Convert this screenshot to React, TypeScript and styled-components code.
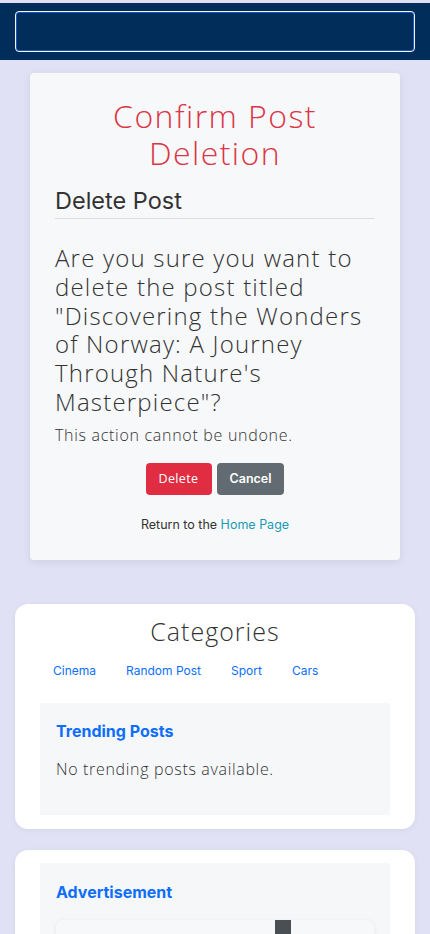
import React from "react";
import styled, { createGlobalStyle } from "styled-components";

const Global = createGlobalStyle`
  html, body { margin: 0; padding: 0; }
  body {
    background: #e1e1f6;
    font-family: Inter, "Liberation Sans", sans-serif;
    color: #333;
  }
  * { box-sizing: border-box; }
`;

const light = `"Open Sans", "Noto Sans", sans-serif`;

const Header = styled.header`
  margin-top: 3px;
  height: 57px;
  background: #012d5b;
  padding: 8px 15px 0;
`;

const SearchBox = styled.div`
  height: 41px;
  border: 1px solid #f2f6ff;
  border-radius: 4px;
  box-shadow: inset 0 0 0 1px #1556b8;
  background: #012d5b;
`;

const Main = styled.main`
  display: flex;
  flex-direction: column;
  padding: 13px 15px 0;
`;

const ConfirmCard = styled.section`
  margin: 0 15px;
  background: #f7f8fa;
  border-radius: 4px;
  box-shadow: 0 2px 8px rgba(0, 0, 0, 0.08);
  padding: 24px 25px 28px;
`;

const Title = styled.h1`
  margin: 0;
  text-align: center;
  color: #dc3545;
  font-family: ${light};
  font-weight: 300;
  font-size: 32px;
  letter-spacing: 0.045em;
  line-height: 37px;
`;

const SubTitle = styled.h2`
  margin: 15px 0 0;
  font-size: 23.5px;
  font-weight: 400;
  color: #333;
  line-height: 30px;
  padding-bottom: 2px;
  border-bottom: 1px solid #dadde2;
`;

const Question = styled.p`
  margin: 25px 0 0;
  font-family: ${light};
  font-weight: 300;
  font-size: 24px;
  letter-spacing: 0.05em;
  line-height: 28.8px;
  color: #333;
`;

const Note = styled.p`
  margin: 6px 0 0;
  font-family: ${light};
  font-weight: 300;
  font-size: 16px;
  letter-spacing: 0.044em;
  line-height: 24px;
  color: #333;
`;

const Buttons = styled.div`
  display: flex;
  justify-content: center;
  gap: 5px;
  margin-top: 16px;
`;

const Btn = styled.button<{ $variant: "danger" | "secondary" }>`
  height: 32px;
  border: none;
  border-radius: 4px;
  padding: 0 13px;
  color: #fff;
  font-size: 12.5px;
  font-family: ${(p) => (p.$variant === "danger" ? light : `Inter, sans-serif`)};
  font-weight: ${(p) => (p.$variant === "danger" ? 400 : 600)};
  letter-spacing: ${(p) => (p.$variant === "danger" ? "0.03em" : "0")};
  background: ${(p) => (p.$variant === "danger" ? "#e02d42" : "#616b71")};
`;

const ReturnLine = styled.p`
  margin: 22px 0 0;
  text-align: center;
  font-size: 12.5px;
  color: #333;
`;

const TealLink = styled.a`
  color: #1a9bb2;
  text-decoration: none;
`;

const WhiteCard = styled.section<{ $mt: number }>`
  margin-top: ${(p) => p.$mt}px;
  background: #fff;
  border-radius: 13px;
  box-shadow: 0 1px 6px rgba(0, 0, 0, 0.05);
  padding: 13px 25px 14px;
`;

const CatTitle = styled.h3`
  margin: 0;
  text-align: center;
  font-family: ${light};
  font-weight: 300;
  font-size: 25px;
  letter-spacing: 0.04em;
  line-height: 28px;
  color: #333;
`;

const CatNav = styled.nav`
  display: flex;
  margin: 17px 0 0 -2px;
`;

const CatLink = styled.a`
  color: #0d6efd;
  text-decoration: none;
  font-size: 12px;
  line-height: 18px;
  padding: 0 15px;
`;

const InnerBox = styled.div<{ $h?: number }>`
  margin-top: ${(p) => (p.$h ? 23 : 0)}px;
  background: #f6f7f9;
  padding: ${(p) => (p.$h ? "17px" : "18px")} 16px 20px;
  min-height: ${(p) => p.$h ?? 0}px;
`;

const BoxTitle = styled.h4`
  margin: 0;
  color: #0d6efd;
  font-size: 16px;
  font-weight: 700;
  line-height: 22px;
`;

const BoxText = styled.p`
  margin: 15px 0 0;
  font-family: ${light};
  font-weight: 300;
  font-size: 16px;
  letter-spacing: 0.042em;
  line-height: 24px;
  color: #333;
`;

const AdFrame = styled.div`
  margin-top: 17px;
  height: 60px;
  background: #f7f8fa;
  border-radius: 8px;
  box-shadow: 0 1px 5px rgba(0, 0, 0, 0.08);
  display: flex;
  justify-content: center;
`;

const AdBar = styled.div`
  width: 16px;
  height: 60px;
  margin-left: 136px;
  background: #4a4f54;
`;

export default function App() {
  return (
    <>
      <Global />
      <Header>
        <SearchBox />
      </Header>
      <Main>
        <ConfirmCard>
          <Title>Confirm Post Deletion</Title>
          <SubTitle>Delete Post</SubTitle>
          <Question>
            Are you sure you want to delete the post titled "Discovering the Wonders of Norway: A Journey Through
            Nature's Masterpiece"?
          </Question>
          <Note>This action cannot be undone.</Note>
          <Buttons>
            <Btn $variant="danger">Delete</Btn>
            <Btn $variant="secondary">Cancel</Btn>
          </Buttons>
          <ReturnLine>
            Return to the <TealLink href="#">Home Page</TealLink>
          </ReturnLine>
        </ConfirmCard>
        <WhiteCard $mt={44}>
          <CatTitle>Categories</CatTitle>
          <CatNav>
            <CatLink href="#">Cinema</CatLink>
            <CatLink href="#">Random Post</CatLink>
            <CatLink href="#">Sport</CatLink>
            <CatLink href="#">Cars</CatLink>
          </CatNav>
          <InnerBox $h={112}>
            <BoxTitle>Trending Posts</BoxTitle>
            <BoxText>No trending posts available.</BoxText>
          </InnerBox>
        </WhiteCard>
        <WhiteCard $mt={21}>
          <InnerBox>
            <BoxTitle>Advertisement</BoxTitle>
            <AdFrame>
              <AdBar />
            </AdFrame>
          </InnerBox>
        </WhiteCard>
      </Main>
    </>
  );
}
